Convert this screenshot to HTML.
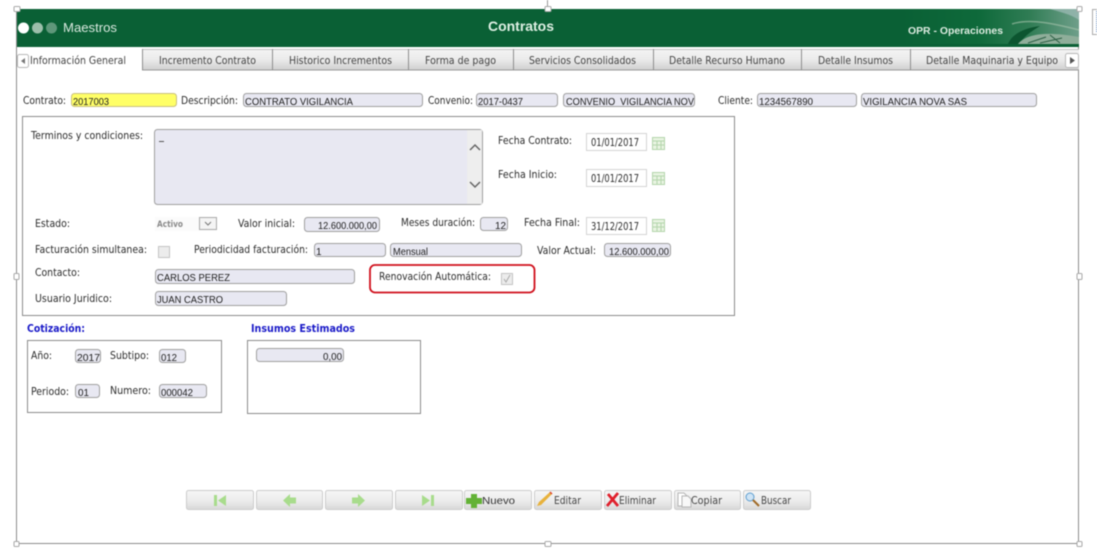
<!DOCTYPE html>
<html><head><meta charset="utf-8"><title>Contratos</title>
<style>
html,body{margin:0;padding:0;background:#fff;width:1097px;height:559px;overflow:hidden}
svg{display:block;filter:blur(.4px)}
text{font-family:"DejaVu Sans",sans-serif;font-size:10.5px;fill:#333;white-space:pre}
.l{font-family:"DejaVu Sans",sans-serif;font-size:10.5px;fill:#2c2c2c}
.v{font-family:"Liberation Sans",sans-serif;font-size:10px;fill:#222}
.i{fill:#e8e8f2;stroke:#a0a0a0;stroke-width:1}
.d{fill:#fff;stroke:#d4d4d4;stroke-width:1}
.b{fill:url(#btn);stroke:#cccccc;stroke-width:1}
.h{fill:#fff;stroke:#a8a8a8;stroke-width:1}
.box{fill:#fff;stroke:#8c8c8c;stroke-width:1}
.t{font-family:"DejaVu Sans",sans-serif;font-size:10.5px;fill:#444}
.blue{font-family:"DejaVu Sans",sans-serif;font-size:10.5px;font-weight:bold;fill:#1a1ac8}
</style></head><body>
<svg width="1097" height="559" viewBox="0 0 1097 559" xmlns="http://www.w3.org/2000/svg">
<defs>
<linearGradient id="tab" x1="0" y1="0" x2="0" y2="1"><stop offset="0" stop-color="#f4f4f4"/><stop offset=".5" stop-color="#ebebeb"/><stop offset="1" stop-color="#cfcfcf"/></linearGradient>
<linearGradient id="btn" x1="0" y1="0" x2="0" y2="1"><stop offset="0" stop-color="#f6f6f6"/><stop offset=".55" stop-color="#ececec"/><stop offset="1" stop-color="#d8d8d8"/></linearGradient>
<linearGradient id="hd" x1="0" y1="0" x2="1" y2="0"><stop offset="0" stop-color="#0a6035"/><stop offset=".45" stop-color="#0f6a3b"/><stop offset=".72" stop-color="#2f7c54"/><stop offset="1" stop-color="#6f9f8a"/></linearGradient>
</defs>

<!-- outer frame -->
<rect x="16.500" y="9.500" width="1062" height="534" fill="#fff" stroke="#8c8c8c"/>
<line x1="547.500" y1="0" x2="547.500" y2="9" stroke="#999"/>

<!-- header -->
<rect x="17" y="9" width="1062" height="38" fill="#0a6035"/>
<rect x="900" y="9" width="179" height="35" fill="url(#hd)"/>
<path d="M1008 44C1012 34 1024 28 1040 26C1030 32 1022 38 1020 44Z" fill="#0c5530"/>
<path d="M1018 44C1026 34 1046 31 1079 37V44Z" fill="#8fae9a"/>
<path d="M1028 43L1046 37M1040 43L1062 38M1050 35L1060 43" stroke="#2c5f44" stroke-width="1" fill="none"/>
<path d="M1012 24C1030 18 1056 24 1079 30" stroke="#a9c4ae" stroke-width="1.500" fill="none" opacity=".6"/>
<path d="M1050 9H1079V20C1070 14 1060 12 1050 9Z" fill="#9fbcb8" opacity=".7"/>
<circle cx="23.500" cy="28" r="5.500" fill="#fff"/>
<circle cx="37.500" cy="28" r="5.500" fill="#9dbfab"/>
<circle cx="51.500" cy="28" r="5.500" fill="#5f977a"/>
<text x="63" y="32" style="font-family:'Liberation Sans',sans-serif;font-size:12.500px;fill:#d8e8de" textLength="54" lengthAdjust="spacingAndGlyphs">Maestros</text>
<text x="488" y="31" style="font-family:'Liberation Sans',sans-serif;font-size:14px;font-weight:bold;fill:#dff0e4" textLength="66" lengthAdjust="spacingAndGlyphs">Contratos</text>
<text x="908" y="34" style="font-family:'Liberation Sans',sans-serif;font-size:10.500px;font-weight:bold;fill:#dcebe0" textLength="95" lengthAdjust="spacingAndGlyphs">OPR - Operaciones</text>

<!-- tabs -->
<rect x="142" y="49" width="937" height="21" fill="url(#tab)"/>
<line x1="142" y1="49.500" x2="1079" y2="49.500" stroke="#c4c4c4"/>
<line x1="142" y1="70" x2="1079" y2="70" stroke="#9a9a9a"/>
<g stroke="#8e8e8e" stroke-width="1">
<line x1="142.500" y1="49" x2="142.500" y2="70"/>
<line x1="272.500" y1="49" x2="272.500" y2="70"/>
<line x1="408.500" y1="49" x2="408.500" y2="70"/>
<line x1="513.500" y1="49" x2="513.500" y2="70"/>
<line x1="653.500" y1="49" x2="653.500" y2="70"/>
<line x1="801.500" y1="49" x2="801.500" y2="70"/>
<line x1="910.500" y1="49" x2="910.500" y2="70"/>
</g>
<rect x="17.500" y="54.500" width="11" height="13" rx="2" fill="#fff" stroke="#b8b8b8"/>
<path d="M25 58L21 61L25 64Z" fill="#777"/>
<rect x="1065.500" y="53.500" width="13" height="14" rx="2" fill="#fff" stroke="#b8b8b8"/>
<path d="M1070 57L1075 60.500L1070 64Z" fill="#555"/>
<text class="t" x="30" y="64" textLength="96" lengthAdjust="spacingAndGlyphs">Información General</text>
<text class="t" x="159" y="64" textLength="97" lengthAdjust="spacingAndGlyphs">Incremento Contrato</text>
<text class="t" x="289" y="64" textLength="103" lengthAdjust="spacingAndGlyphs">Historico Incrementos</text>
<text class="t" x="425" y="64" textLength="71" lengthAdjust="spacingAndGlyphs">Forma de pago</text>
<text class="t" x="529" y="64" textLength="107" lengthAdjust="spacingAndGlyphs">Servicios Consolidados</text>
<text class="t" x="669" y="64" textLength="116" lengthAdjust="spacingAndGlyphs">Detalle Recurso Humano</text>
<text class="t" x="818" y="64" textLength="75" lengthAdjust="spacingAndGlyphs">Detalle Insumos</text>
<text class="t" x="926" y="64" textLength="132" lengthAdjust="spacingAndGlyphs">Detalle Maquinaria y Equipo</text>

<!-- top row -->
<text class="l" x="23" y="104" textLength="43" lengthAdjust="spacingAndGlyphs">Contrato:</text>
<rect x="71.500" y="93.500" width="105" height="13" rx="3" fill="#ffff66" stroke="#c8bf80"/>
<text class="v" x="73" y="105" textLength="36" lengthAdjust="spacingAndGlyphs">2017003</text>
<text class="l" x="181" y="104" textLength="57" lengthAdjust="spacingAndGlyphs">Descripción:</text>
<rect class="i" x="243.500" y="93.500" width="179" height="13" rx="3"/>
<text class="v" x="245" y="105" textLength="108" lengthAdjust="spacingAndGlyphs">CONTRATO VIGILANCIA</text>
<text class="l" x="428" y="104" textLength="45" lengthAdjust="spacingAndGlyphs">Convenio:</text>
<rect class="i" x="476.500" y="93.500" width="81" height="13" rx="3"/>
<text class="v" x="478" y="105" textLength="45" lengthAdjust="spacingAndGlyphs">2017-0437</text>
<rect class="i" x="563.500" y="93.500" width="131" height="13" rx="3"/>
<text class="v" x="566" y="105" textLength="128" lengthAdjust="spacingAndGlyphs">CONVENIO  VIGILANCIA NOV</text>
<text class="l" x="718" y="104" textLength="35" lengthAdjust="spacingAndGlyphs">Cliente:</text>
<rect class="i" x="757.500" y="93.500" width="99" height="13" rx="3"/>
<text class="v" x="759" y="105" textLength="54" lengthAdjust="spacingAndGlyphs">1234567890</text>
<rect class="i" x="861.500" y="93.500" width="175" height="13" rx="3"/>
<text class="v" x="863" y="105" textLength="104" lengthAdjust="spacingAndGlyphs">VIGILANCIA NOVA SAS</text>

<!-- main box -->
<rect class="box" x="22.500" y="116.500" width="712" height="199"/>
<text class="l" x="31" y="139" textLength="112" lengthAdjust="spacingAndGlyphs">Terminos y condiciones:</text>
<rect class="i" x="154.500" y="129.500" width="328" height="75" rx="3"/>
<rect x="467" y="130" width="15" height="74" fill="#eeeeee"/>
<path d="M470 150L475 145L480 150" fill="none" stroke="#666" stroke-width="1.500"/>
<path d="M470 182L475 187L480 182" fill="none" stroke="#666" stroke-width="1.500"/>
<rect x="159" y="141" width="5" height="1" fill="#555"/>

<text class="l" x="498" y="144" textLength="74" lengthAdjust="spacingAndGlyphs">Fecha Contrato:</text>
<rect class="d" x="586.500" y="133.500" width="60" height="17"/>
<text class="l" x="591" y="146" textLength="48" lengthAdjust="spacingAndGlyphs">01/01/2017</text>
<text class="l" x="498" y="178" textLength="59" lengthAdjust="spacingAndGlyphs">Fecha Inicio:</text>
<rect class="d" x="586.500" y="169.500" width="60" height="17"/>
<text class="l" x="591" y="182" textLength="48" lengthAdjust="spacingAndGlyphs">01/01/2017</text>

<g fill="#e8f4e2" stroke="#b4d6ac" stroke-width="1">
<rect x="652.500" y="137.500" width="12" height="12"/>
<rect x="652.500" y="172.500" width="12" height="12"/>
<rect x="652.500" y="219.500" width="12" height="12"/>
<path d="M653 141H664M653 145H664M657 141V149M661 141V149"/>
<path d="M653 176H664M653 180H664M657 176V184M661 176V184"/>
<path d="M653 223H664M653 227H664M657 223V231M661 223V231"/>
</g>

<text class="l" x="35" y="227" textLength="35" lengthAdjust="spacingAndGlyphs">Estado:</text>
<rect x="155" y="217" width="62" height="14" fill="#fbfbfb"/>
<text x="157" y="227" style="font-family:'DejaVu Sans',sans-serif;font-size:8.500px;font-weight:bold;fill:#8a8a8a" textLength="26" lengthAdjust="spacingAndGlyphs">Activo</text>
<rect x="199.500" y="217.500" width="17" height="12" fill="#f4f4f4" stroke="#aaa"/>
<path d="M205 222L208 225L211 222" fill="none" stroke="#777"/>
<text class="l" x="238" y="227" textLength="57" lengthAdjust="spacingAndGlyphs">Valor inicial:</text>
<rect class="i" x="304.500" y="217.500" width="75" height="14" rx="3"/>
<text class="v" x="318" y="229" textLength="59" lengthAdjust="spacingAndGlyphs">12.600.000,00</text>
<text class="l" x="401" y="226" textLength="74" lengthAdjust="spacingAndGlyphs">Meses duración:</text>
<rect class="i" x="480.500" y="217.500" width="27" height="13" rx="3"/>
<text class="v" x="495" y="229" textLength="11" lengthAdjust="spacingAndGlyphs">12</text>
<text class="l" x="524" y="226" textLength="56" lengthAdjust="spacingAndGlyphs">Fecha Final:</text>
<rect class="d" x="586.500" y="217.500" width="60" height="17"/>
<text class="l" x="591" y="230" textLength="48" lengthAdjust="spacingAndGlyphs">31/12/2017</text>

<text class="l" x="35" y="253" textLength="112" lengthAdjust="spacingAndGlyphs">Facturación simultanea:</text>
<rect x="158.500" y="246.500" width="11" height="11" fill="#ececec" stroke="#c4c4c4"/>
<text class="l" x="194" y="253" textLength="114" lengthAdjust="spacingAndGlyphs">Periodicidad facturación:</text>
<rect class="i" x="314.500" y="243.500" width="71" height="13" rx="3"/>
<text class="v" x="316" y="255">1</text>
<rect class="i" x="390.500" y="243.500" width="131" height="13" rx="3"/>
<text class="v" x="393" y="255" textLength="35" lengthAdjust="spacingAndGlyphs">Mensual</text>
<text class="l" x="537" y="254" textLength="59" lengthAdjust="spacingAndGlyphs">Valor Actual:</text>
<rect class="i" x="604.500" y="243.500" width="66" height="13" rx="3"/>
<text class="v" x="609" y="255" textLength="60" lengthAdjust="spacingAndGlyphs">12.600.000,00</text>

<text class="l" x="35" y="276" textLength="45" lengthAdjust="spacingAndGlyphs">Contacto:</text>
<rect class="i" x="155.500" y="269.500" width="199" height="14" rx="3"/>
<text class="v" x="157" y="281" textLength="73" lengthAdjust="spacingAndGlyphs">CARLOS PEREZ</text>
<text class="l" x="35" y="302" textLength="77" lengthAdjust="spacingAndGlyphs">Usuario Juridico:</text>
<rect class="i" x="155.500" y="291.500" width="131" height="14" rx="3"/>
<text class="v" x="157" y="303" textLength="66" lengthAdjust="spacingAndGlyphs">JUAN CASTRO</text>

<rect x="370" y="265" width="164.500" height="27.500" rx="5" fill="#fff" stroke="#d0101c" stroke-width="1.800"/>
<text class="l" x="379" y="280" textLength="112" lengthAdjust="spacingAndGlyphs">Renovación Automática:</text>
<rect x="501.500" y="273.500" width="11" height="11" fill="#ececec" stroke="#c4c4c4"/>
<path d="M504 279L506 282L510 275" fill="none" stroke="#aaa"/>

<!-- cotizacion -->
<text class="blue" x="27" y="332" textLength="58" lengthAdjust="spacingAndGlyphs">Cotización:</text>
<rect class="box" x="27.500" y="340.500" width="194" height="72"/>
<text class="l" x="31" y="359" textLength="21" lengthAdjust="spacingAndGlyphs">Año:</text>
<rect class="i" x="75.500" y="349.500" width="25" height="13" rx="3"/>
<text class="v" x="77" y="361" textLength="23" lengthAdjust="spacingAndGlyphs">2017</text>
<text class="l" x="110" y="359" textLength="39" lengthAdjust="spacingAndGlyphs">Subtipo:</text>
<rect class="i" x="159.500" y="349.500" width="26" height="13" rx="3"/>
<text class="v" x="161" y="361" textLength="16" lengthAdjust="spacingAndGlyphs">012</text>
<text class="l" x="31" y="395" textLength="38" lengthAdjust="spacingAndGlyphs">Periodo:</text>
<rect class="i" x="75.500" y="384.500" width="24" height="13" rx="3"/>
<text class="v" x="78" y="396" textLength="11" lengthAdjust="spacingAndGlyphs">01</text>
<text class="l" x="110" y="394" textLength="41" lengthAdjust="spacingAndGlyphs">Numero:</text>
<rect class="i" x="159.500" y="384.500" width="47" height="13" rx="3"/>
<text class="v" x="161" y="396" textLength="32" lengthAdjust="spacingAndGlyphs">000042</text>

<text class="blue" x="251" y="332" textLength="104" lengthAdjust="spacingAndGlyphs">Insumos Estimados</text>
<rect class="box" x="247.500" y="340.500" width="173" height="73"/>
<rect class="i" x="256.500" y="348.500" width="87" height="13" rx="3"/>
<text class="v" x="323" y="360" textLength="19" lengthAdjust="spacingAndGlyphs">0,00</text>

<!-- buttons -->
<rect class="b" x="186.500" y="490.500" width="67" height="19" rx="2"/>
<rect class="b" x="256.500" y="490.500" width="66" height="19" rx="2"/>
<rect class="b" x="325.500" y="490.500" width="67" height="19" rx="2"/>
<rect class="b" x="395.500" y="490.500" width="67" height="19" rx="2"/>
<rect class="b" x="464.500" y="490.500" width="67" height="19" rx="2"/>
<rect class="b" x="534.500" y="490.500" width="67" height="19" rx="2"/>
<rect class="b" x="604.500" y="490.500" width="67" height="19" rx="2"/>
<rect class="b" x="674.500" y="490.500" width="66" height="19" rx="2"/>
<rect class="b" x="743.500" y="490.500" width="67" height="19" rx="2"/>

<g fill="#a8dc8c">
<rect x="214" y="495" width="3" height="11"/><path d="M218 500.500L226 495V506Z"/>
<path d="M283 500.500L290 494V497.500H296V503.500H290V507Z"/>
<path d="M365 500.500L358 494V497.500H352V503.500H358V507Z"/>
<path d="M430 500.500L422 495V506Z"/><rect x="431" y="495" width="3" height="11"/>
</g>
<path d="M471 494H477V498H482V504H477V508H471V504H466V498H471Z" fill="#63b236"/>
<text x="482" y="504" style="font-family:'Liberation Sans',sans-serif;font-size:10px;fill:#333" textLength="33" lengthAdjust="spacingAndGlyphs">Nuevo</text>
<path d="M537 506L539 502L550 492L552 494L541 505Z" fill="#e8b23c"/>
<path d="M550 492L552 494" stroke="#d43" stroke-width="1.500"/>
<text class="t" x="554" y="504" textLength="27" lengthAdjust="spacingAndGlyphs">Editar</text>
<path d="M608 494L618 506M618 493L607 506" stroke="#e0202c" stroke-width="2.800" fill="none"/>
<text class="t" x="619" y="504" textLength="37" lengthAdjust="spacingAndGlyphs">Eliminar</text>
<path d="M678 493H684L688 497V506H678Z" fill="#fff" stroke="#b5b5b5"/>
<path d="M682 496H688L691 499V507H682Z" fill="#f8f8f8" stroke="#b5b5b5"/>
<text class="t" x="691" y="504" textLength="31" lengthAdjust="spacingAndGlyphs">Copiar</text>
<circle cx="750" cy="497" r="4" fill="#cfe4f5" stroke="#5e9ed0"/>
<path d="M753 500L759 506" stroke="#a06a28" stroke-width="2"/>
<text class="t" x="761" y="504" textLength="30" lengthAdjust="spacingAndGlyphs">Buscar</text>

<!-- selection handles -->
<rect class="h" x="14" y="6.500" width="6" height="5" rx="1"/>
<rect class="h" x="545" y="6.500" width="6" height="5" rx="1"/>
<rect class="h" x="1077" y="6.500" width="5" height="5" rx="1"/>
<rect class="h" x="14" y="273.500" width="5" height="6" rx="1"/>
<rect class="h" x="1077" y="273.500" width="5" height="6" rx="1"/>
<rect class="h" x="14" y="541.500" width="5" height="5" rx="1"/>
<rect class="h" x="545" y="541.500" width="6" height="5" rx="1"/>
<rect class="h" x="1077" y="541.500" width="5" height="5" rx="1"/>

<!-- right side icon -->
<rect x="1092.500" y="9.500" width="10" height="25" fill="#fff" stroke="#aaa"/>
<line x1="1096.500" y1="11" x2="1096.500" y2="33" stroke="#6a8fc0" stroke-dasharray="1 1"/>
</svg>
</body></html>
